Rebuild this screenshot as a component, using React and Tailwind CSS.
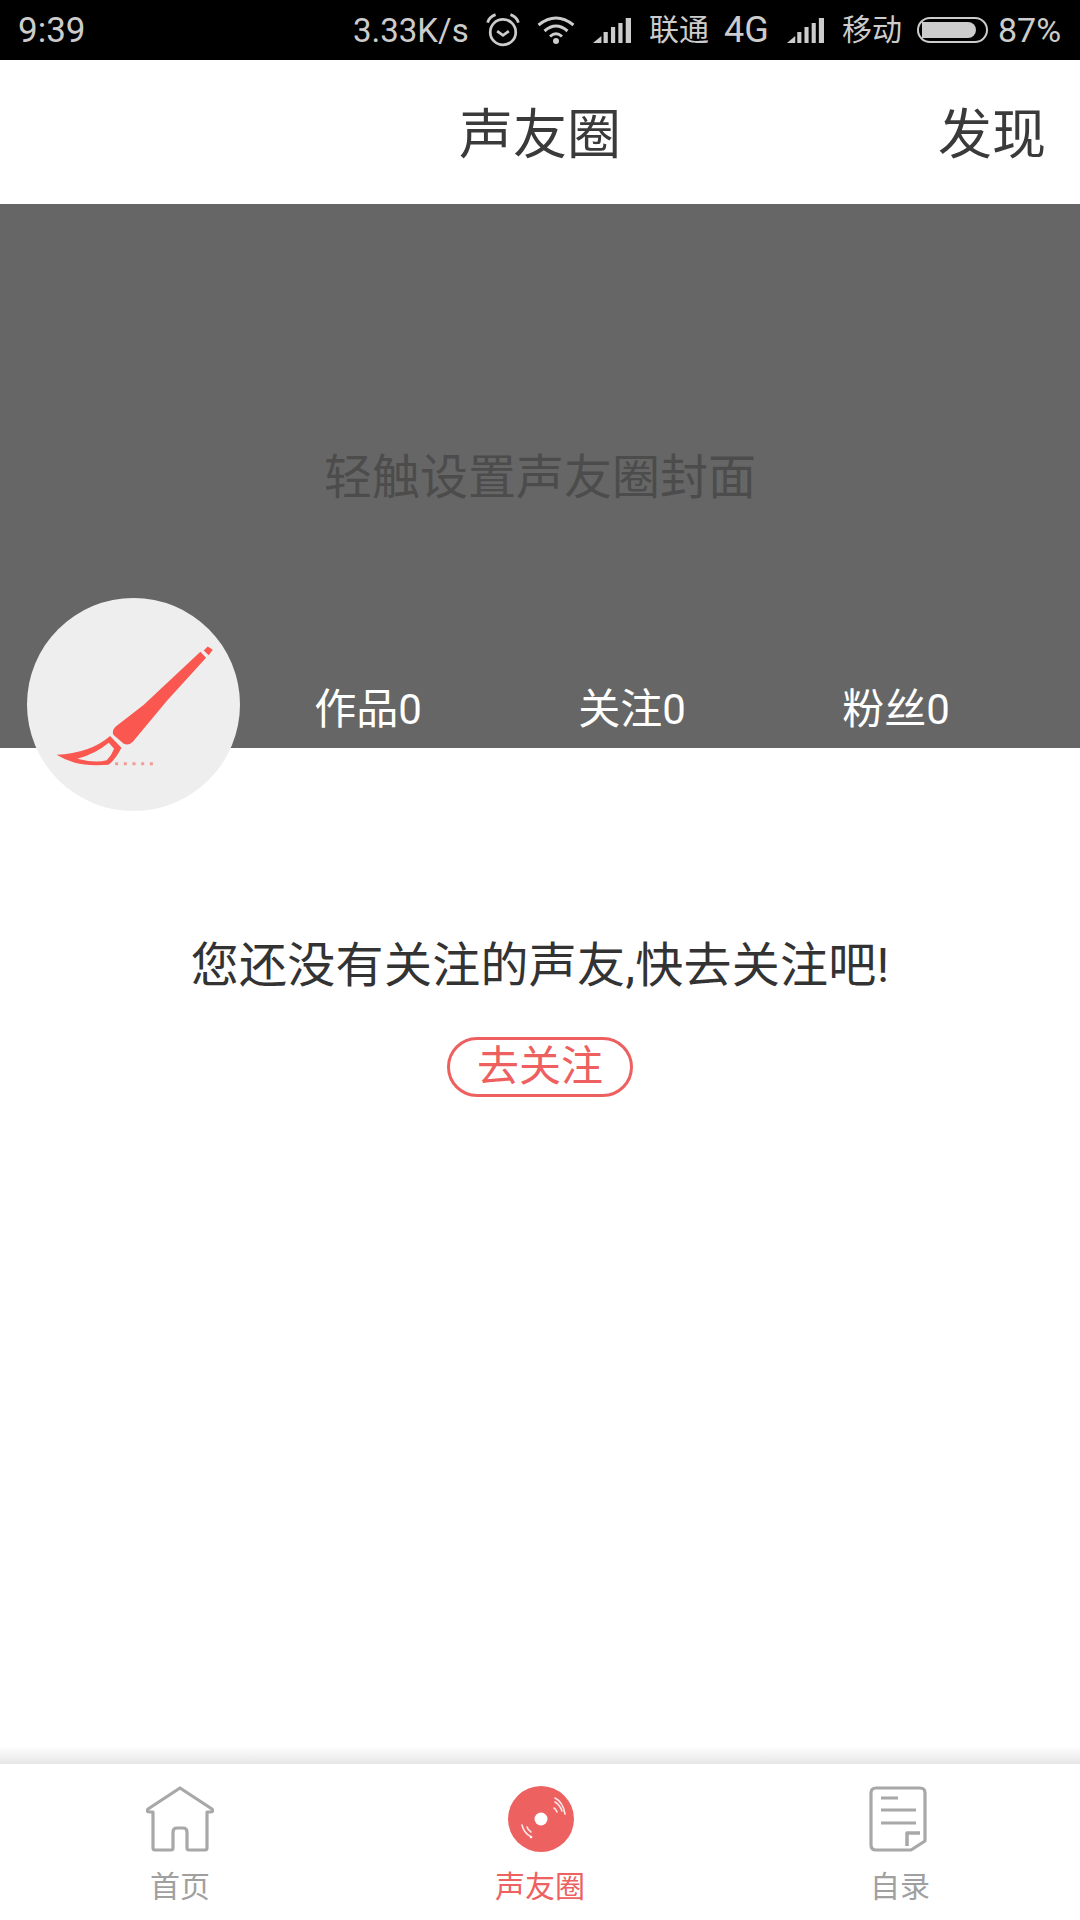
const FONT = "font-['Roboto','Noto_Sans_CJK_SC',sans-serif]";

const Signal = ({ className }) => (
  <svg viewBox="0 0 36 26" preserveAspectRatio="none" className={className} fill="#ccc">
    <path d="M0 26 L8 19 V26 Z" />
    <rect x="10" y="15" width="4" height="11" />
    <rect x="17" y="10" width="4" height="16" />
    <rect x="24" y="6" width="4" height="20" />
    <rect x="31" y="1" width="5" height="25" />
  </svg>
);

const StatusBar = () => (
  <div className="flex h-[60px] shrink-0 items-center bg-black text-[#ccc]">
    <span className="ml-[18px] w-[67px] text-[35px] leading-none">9:39</span>
    <span className="ml-[268px] w-[115px] text-[33px] leading-none whitespace-nowrap">3.33K/s</span>
    <svg viewBox="0 0 32 32" className="ml-[18px] h-[34px] w-[34px]" fill="none" stroke="#ccc" strokeWidth="2.6">
      <circle cx="16" cy="18" r="12" />
      <path d="M10.5 17 L16 21 L21.5 17" />
      <path d="M1.5 9 Q3 3.5 9 1.5 M30.5 9 Q29 3.5 23 1.5" />
    </svg>
    <svg viewBox="0 0 38 28" className="ml-[16px] h-7 w-10" fill="none" stroke="#ccc" strokeWidth="3">
      <path d="M1.5 9 Q19 -5 36.5 9 M7.5 15 Q19 5 30.5 15 M13 20.5 Q19 15 25 20.5" />
      <circle cx="19" cy="25" r="3" fill="#ccc" stroke="none" />
    </svg>
    <Signal className="ml-[17px] h-[26px] w-[38px]" />
    <span className="ml-[18px] w-[60px] text-[30px] leading-none">联通</span>
    <span className="ml-[15px] w-[45px] text-[36px] leading-none">4G</span>
    <Signal className="ml-[18px] h-[26px] w-[37px]" />
    <span className="ml-[18px] w-[60px] text-[30px] leading-none">移动</span>
    <div className="ml-[15px] flex h-[26px] w-[71px] items-center rounded-full border-2 border-[#ccc] p-[3px]">
      <div className="h-full w-[54px] rounded-r-full rounded-l-[4px] bg-[#ccc]" />
    </div>
    <span className="ml-[10px] text-[34px] leading-none">87%</span>
  </div>
);

const Brush = () => (
  <svg viewBox="82 55 636 637" className="h-full w-full">
    <path
      fill="#fa5750"
      d="M610 212 L622 200 L637 210 L625 226 Z M600 216 L617 234 L500 362 L398 485 Q385 498 370 490 L342 466 Q332 455 346 440 L430 375 Z"
    />
    <path
      fill="#fa5750"
      fillRule="evenodd"
      d="M170 524 Q270 520 330 468 L364 503 Q345 540 325 554 Q260 558 225 548 Q195 540 170 524 Z M232 536 Q285 550 320 540 Q335 525 342 506 L326 488 Q285 522 232 536 Z"
    />
    <path stroke="#fa5750" strokeOpacity="0.55" strokeWidth="9" strokeDasharray="9 17" fill="none" d="M345 551 H465" />
  </svg>
);

const HomeIcon = () => (
  <svg viewBox="0 0 70 66" className="h-[66px] w-[70px]" fill="none" stroke="#a8a8a8" strokeWidth="3.2" strokeLinejoin="round">
    <path d="M35 2 L67 23 Q69 26 65 26 H62 V62 Q62 64 60 64 H44 Q42 64 42 62 V46 Q42 42 38 42 H32 Q28 42 28 46 V62 Q28 64 26 64 H10 Q8 64 8 62 V26 H5 Q1 26 3 23 Z" />
  </svg>
);

const DiscIcon = () => (
  <svg viewBox="0 0 66 66" className="ml-[2px] h-[66px] w-[66px]">
    <circle cx="33" cy="33" r="33" fill="#ee6161" />
    <circle cx="33" cy="33" r="6.5" fill="#fff" />
    <g fill="none" stroke="#fff" strokeOpacity="0.85" strokeWidth="1.6" strokeLinecap="round">
      <path d="M46 22 Q48 23 49 26" />
      <path d="M47 16 Q52 19 54 25" />
      <path d="M47 12 Q55 16 57 28" />
      <path d="M19 41 Q20 44 23 46" />
      <path d="M14 39 Q16 47 22 50" />
    </g>
    <circle cx="23" cy="51" r="1.3" fill="#fff" />
  </svg>
);

const DocIcon = () => (
  <svg viewBox="0 0 58 66" className="mr-[4px] h-[66px] w-[58px]" fill="none" stroke="#a8a8a8" strokeWidth="3.2" strokeLinejoin="round">
    <path d="M7 2 H51 Q56 2 56 7 V55 L42 64 H7 Q2 64 2 59 V7 Q2 2 7 2 Z" />
    <path d="M12 12 H29 M12 24 H47 M12 37 H47" strokeWidth="3" />
    <path d="M38 60 V47 H51" strokeWidth="3.5" />
  </svg>
);

const Tab = ({ icon, label, active }) => (
  <div className="flex flex-col items-center">
    <div className="flex h-[66px] items-center">{icon}</div>
    <span className={`mt-[15px] text-[30px] leading-[40px] ${active ? "text-[#ee6161]" : "text-[#a0a0a0]"}`}>
      {label}
    </span>
  </div>
);

export default function App() {
  return (
    <div className={`flex h-[1920px] w-[1080px] flex-col overflow-hidden bg-white ${FONT}`}>
      <StatusBar />
      <div className="relative flex h-[144px] shrink-0 items-center justify-center pt-2 text-[#3a3a3a]">
        <span className="text-[54px] leading-none">声友圈</span>
        <span className="absolute right-[34px] text-[54px] leading-none">发现</span>
      </div>

      <div className="relative flex h-[544px] shrink-0 flex-col bg-[#666]">
        <p className="mt-[250px] text-center text-[48px] leading-none text-[#4c4c4c]">轻触设置声友圈封面</p>
        <div className="mt-[187px] ml-[236px] grid w-[792px] grid-cols-3 text-center text-[42px] leading-none text-white">
          <span>作品0</span>
          <span>关注0</span>
          <span>粉丝0</span>
        </div>
        <div className="absolute top-[394px] left-[27px] h-[213px] w-[213px] rounded-full bg-[#eee]">
          <Brush />
        </div>
      </div>

      <div className="flex flex-1 flex-col items-center pt-[190px]">
        <p className="text-[48px] leading-[56px] tracking-[0.3px] text-[#333]">您还没有关注的声友,快去关注吧!</p>
        <button className="mt-[43px] h-[60px] w-[186px] rounded-full border-[3px] border-[#ee5f5f] text-[42px] leading-none text-[#ee5f5f]">
          去关注
        </button>
      </div>

      <div className="h-[18px] shrink-0 bg-gradient-to-b from-white to-[#e6e6e6]" />
      <div className="grid h-[156px] shrink-0 grid-cols-3 bg-white pt-[22px]">
        <Tab icon={<HomeIcon />} label="首页" />
        <Tab icon={<DiscIcon />} label="声友圈" active />
        <Tab icon={<DocIcon />} label="自录" />
      </div>
    </div>
  );
}
